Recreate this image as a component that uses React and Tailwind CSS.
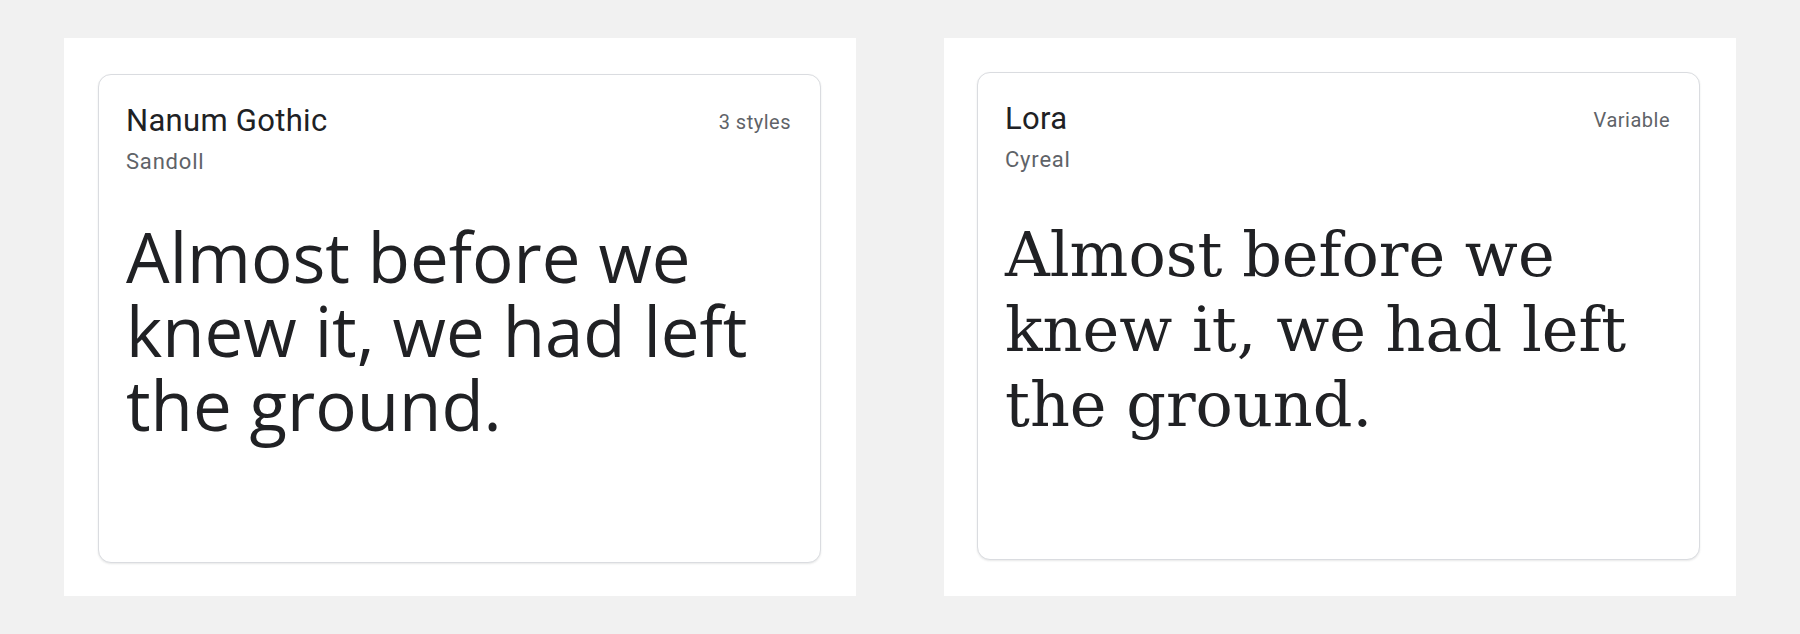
const fonts = [
  {
    name: "Nanum Gothic",
    maker: "Sandoll",
    meta: "3 styles",
    specimen: "font-['Open_Sans',sans-serif] text-[69px] leading-[74px]",
    panel: "pt-[36px] pl-[34px]",
    card: "h-[489px]",
  },
  {
    name: "Lora",
    maker: "Cyreal",
    meta: "Variable",
    specimen: "font-['DejaVu_Serif',serif] text-[62px] leading-[75px]",
    panel: "pt-[34px] pl-[33px]",
    card: "h-[488px]",
  },
]

function FontCard({ name, maker, meta, specimen, card }) {
  return (
    <div
      className={`${card} w-[723px] flex flex-col bg-white border border-[#dadce0] rounded-[13px] pt-[28px] pl-[27px] pr-[29px] shadow-[0_1px_2px_rgba(60,64,67,0.12)]`}
    >
      <div className="flex items-start justify-between">
        <div className="flex flex-col">
          <p className="text-[31px] leading-[36px] tracking-[0.3px] text-[#202124] font-['Roboto',sans-serif]">{name}</p>
          <p className="mt-[9px] text-[22px] leading-[28px] tracking-[0.8px] text-[#5f6368] font-['Roboto',sans-serif]">{maker}</p>
        </div>
        <span className="mt-[7px] text-[20px] leading-[24px] tracking-[0.5px] text-[#5f6368] font-['Roboto',sans-serif]">{meta}</span>
      </div>
      <p className={`${specimen} mt-[43px] text-[#202124]`}>
        Almost before we knew it, we had left the ground.
      </p>
    </div>
  )
}

export default function App() {
  return (
    <div className="w-[1800px] h-[634px] bg-[#f1f1f1] flex gap-[88px] px-[64px] pt-[38px]">
      {fonts.map((f) => (
        <div key={f.name} className={`${f.panel} w-[792px] h-[558px] bg-white`}>
          <FontCard {...f} />
        </div>
      ))}
    </div>
  )
}
